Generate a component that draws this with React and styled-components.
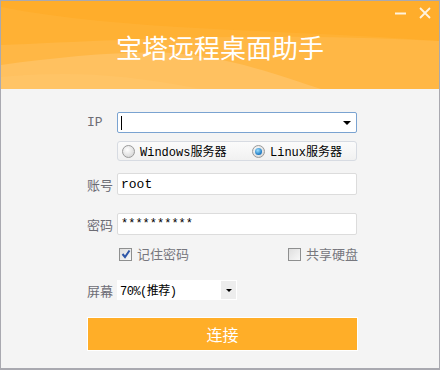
import React from "react";
import styled, { createGlobalStyle } from "styled-components";

const Global = createGlobalStyle`
  html, body { margin: 0; padding: 0; background: #f4f4f4; }
  * { box-sizing: border-box; }
`;

const Window = styled.div`
  width: 440px;
  height: 370px;
  border: 1px solid #a9a9b0;
  border-bottom-width: 2px;
  background: #f4f4f4;
  display: flex;
  flex-direction: column;
  font-family: "Noto Sans CJK SC", "Noto Sans", sans-serif;
  overflow: hidden;
`;

const Header = styled.div`
  position: relative;
  height: 88px;
  background: #ffad2b;
  display: flex;
  align-items: center;
  justify-content: center;
  flex-shrink: 0;
`;

const Waves = styled.svg`
  position: absolute;
  left: 0;
  top: 0;
  width: 100%;
  height: 100%;
`;

const Title = styled.h1`
  position: relative;
  margin: 0;
  margin-top: 4px;
  color: #fff;
  font-size: 26px;
  font-weight: 400;
  line-height: 1;
`;

const WinButtons = styled.div`
  position: absolute;
  top: 6px;
  right: 8px;
  display: flex;
  gap: 12px;
  align-items: center;
`;

const Body = styled.div`
  display: flex;
  flex-direction: column;
  padding-left: 85px;
  padding-right: 82px;
`;

const Row = styled.div`
  display: flex;
  align-items: center;
  margin-top: ${(p) => p.$mt}px;
  padding-left: ${(p) => p.$pl || 0}px;
`;

const Label = styled.div`
  width: 31px;
  flex-shrink: 0;
  font-size: 13px;
  color: #6c6c74;
  font-family: ${(p) => (p.$mono ? '"Liberation Mono", monospace' : '"Noto Sans CJK SC", sans-serif')};
  padding-left: 1px;
`;

const Field = styled.div`
  position: relative;
  width: 240px;
  height: ${(p) => p.$h}px;
  background: #fff;
  border: 1px solid ${(p) => (p.$focus ? "#7aa3d1" : "#dcdcdc")};
  border-radius: 2px;
  display: flex;
  align-items: center;
  padding-left: 3px;
  font-family: "Liberation Mono", "Noto Sans CJK SC", monospace;
  font-size: ${(p) => p.$fs || 13}px;
  color: #000;
`;

const Caret = styled.span`
  width: 1px;
  height: 14px;
  background: #000;
`;

const DropArrow = styled.span`
  position: absolute;
  right: ${(p) => p.$r}px;
  top: 50%;
  margin-top: -2px;
  width: 0;
  height: 0;
  border-left: 4px solid transparent;
  border-right: 4px solid transparent;
  border-top: 4px solid #000;
`;

const RadioBox = styled.div`
  width: 240px;
  height: 20px;
  border: 1px solid #d7dbe2;
  border-radius: 3px;
  background: linear-gradient(#fbfbfb, #f1f1f1);
  display: flex;
  align-items: center;
  padding-left: 4px;
`;

const RadioItem = styled.label`
  display: flex;
  align-items: center;
  gap: 5px;
  width: ${(p) => p.$w}px;
  font-family: "Liberation Mono", "Noto Sans CJK SC", monospace;
  font-size: 12px;
  color: #000;
`;

const RadioDot = styled.span`
  width: 13px;
  height: 13px;
  border-radius: 50%;
  border: 1px solid #9a9a9a;
  background: radial-gradient(circle at 40% 35%, #ffffff, #dcdcdc 70%, #c9c9c9);
  display: flex;
  align-items: center;
  justify-content: center;
  &::after {
    content: "";
    display: ${(p) => (p.$on ? "block" : "none")};
    width: 7px;
    height: 7px;
    border-radius: 50%;
    background: radial-gradient(circle at 40% 35%, #9fe0ff, #1a78c2 70%, #0d4f8f);
  }
`;

const CheckRow = styled.div`
  display: flex;
  justify-content: space-between;
  width: 240px;
  height: 16px;
  margin-left: 32px;
  margin-top: 11px;
  padding-left: 1px;
`;

const CheckItem = styled.label`
  display: flex;
  align-items: center;
  gap: 5px;
  font-size: 13px;
  line-height: 16px;
  color: #77777e;
`;

const CheckBox = styled.span`
  width: 13px;
  height: 13px;
  border: 1px solid #8e8f8f;
  background: linear-gradient(135deg, #dedede, #f8f8f8);
  display: flex;
  align-items: center;
  justify-content: center;
`;

const Select = styled.div`
  position: relative;
  width: 120px;
  height: 20px;
  background: #fff;
  display: flex;
  align-items: center;
  padding-left: 3px;
  font-family: "Liberation Mono", "Noto Sans CJK SC", monospace;
  font-size: 12px;
  letter-spacing: -0.5px;
  color: #000;
`;

const SelectBtn = styled.span`
  position: absolute;
  right: 1px;
  top: 1px;
  bottom: 1px;
  width: 15px;
  background: #ededed;
  display: flex;
  align-items: center;
  justify-content: center;
  &::after {
    content: "";
    border-left: 3px solid transparent;
    border-right: 3px solid transparent;
    border-top: 3px solid #000;
  }
`;

const Connect = styled.button`
  margin-top: 17px;
  margin-left: 1px;
  width: 271px;
  height: 34px;
  border: 1px solid #fff;
  background: #ffae28;
  color: #fff;
  font-family: "Noto Sans CJK SC", sans-serif;
  font-size: 16px;
  padding: 0;
`;

function Check() {
  return (
    <svg width="10" height="10" viewBox="0 0 10 10">
      <path d="M1.5 5 L4 8 L8.5 1.5" fill="none" stroke="#2d56a8" strokeWidth="2" />
    </svg>
  );
}

export default function App() {
  return (
    <>
      <Global />
      <Window>
        <Header>
          <Waves viewBox="0 0 438 88" preserveAspectRatio="none">
            <path d="M0 6 C120 30 280 28 438 40 L438 88 L0 88 Z" fill="#ffb43a" opacity="0.6" />
            <path d="M0 44 C100 40 250 30 438 40 L438 88 L0 88 Z" fill="#ffb745" />
            <path d="M0 64 C60 56 120 50 170 52 C230 56 280 75 320 88 L0 88 Z" fill="#ffc160" />
            <path d="M0 76 C60 70 120 72 200 88 L0 88 Z" fill="#ffc466" />
          </Waves>
          <Title>宝塔远程桌面助手</Title>
          <WinButtons>
            <svg width="12" height="12" viewBox="0 0 12 12">
              <path d="M0 6.5 H11" stroke="#fff3de" strokeWidth="2" />
            </svg>
            <svg width="12" height="12" viewBox="0 0 12 12">
              <path d="M1 1 L11 11 M11 1 L1 11" stroke="#fff3de" strokeWidth="1.8" />
            </svg>
          </WinButtons>
        </Header>
        <Body>
          <Row $mt={23}>
            <Label $mono>IP</Label>
            <Field $h={21} $focus>
              <Caret />
              <DropArrow $r={5} />
            </Field>
          </Row>
          <Row $mt={8} $pl={31}>
            <RadioBox>
              <RadioItem $w={130}>
                <RadioDot />
                Windows服务器
              </RadioItem>
              <RadioItem $w={100}>
                <RadioDot $on />
                Linux服务器
              </RadioItem>
            </RadioBox>
          </Row>
          <Row $mt={12}>
            <Label>账号</Label>
            <Field $h={22}>root</Field>
          </Row>
          <Row $mt={18}>
            <Label>密码</Label>
            <Field $h={22} $fs={12}>**********</Field>
          </Row>
          <CheckRow>
            <CheckItem>
              <CheckBox>
                <Check />
              </CheckBox>
              记住密码
            </CheckItem>
            <CheckItem>
              <CheckBox />
              共享硬盘
            </CheckItem>
          </CheckRow>
          <Row $mt={18}>
            <Label>屏幕</Label>
            <Select>
              70%(推荐)
              <SelectBtn />
            </Select>
          </Row>
          <Connect>连接</Connect>
        </Body>
      </Window>
    </>
  );
}
